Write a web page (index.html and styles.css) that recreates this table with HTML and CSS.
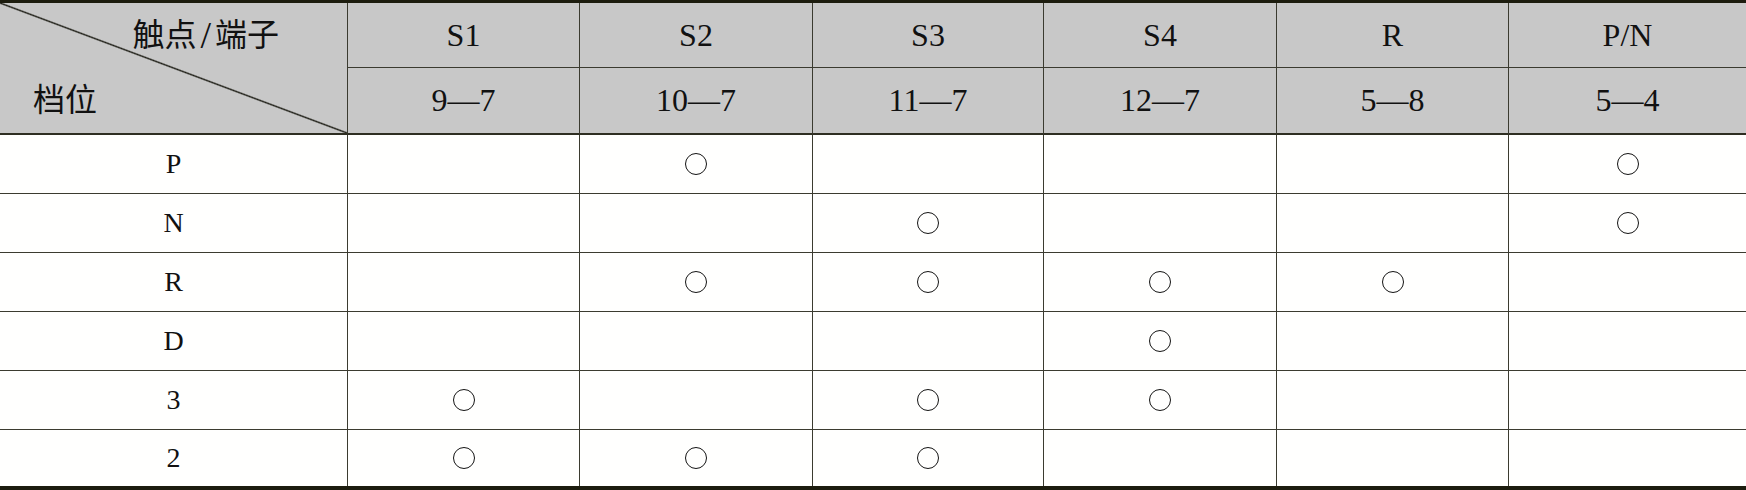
FILE: index.html
```html
<!DOCTYPE html>
<html lang="zh">
<head>
<meta charset="utf-8">
<title>档位触点表</title>
<link rel="stylesheet" href="styles.css">
</head>
<body>
<table class="grid">
  <colgroup>
    <col class="c0"><col class="c1"><col class="c2"><col class="c3"><col class="c4"><col class="c5"><col class="c6">
  </colgroup>
  <thead>
    <tr class="h1">
      <th rowspan="2" class="diag">
        <div class="diag-box">
          <span class="diag-top">触点<span class="slash">/</span>端子</span>
          <span class="diag-bottom">档位</span>
        </div>
      </th>
      <th>S1</th><th>S2</th><th>S3</th><th>S4</th><th>R</th><th class="last">P/N</th>
    </tr>
    <tr class="h2">
      <th>9—7</th><th>10—7</th><th>11—7</th><th>12—7</th><th>5—8</th><th class="last">5—4</th>
    </tr>
  </thead>
  <tbody>
    <tr><td class="gear">P</td><td></td><td><span class="dot"></span></td><td></td><td></td><td></td><td class="last"><span class="dot"></span></td></tr>
    <tr><td class="gear">N</td><td></td><td></td><td><span class="dot"></span></td><td></td><td></td><td class="last"><span class="dot"></span></td></tr>
    <tr><td class="gear">R</td><td></td><td><span class="dot"></span></td><td><span class="dot"></span></td><td><span class="dot"></span></td><td><span class="dot"></span></td><td class="last"></td></tr>
    <tr><td class="gear">D</td><td></td><td></td><td></td><td><span class="dot"></span></td><td></td><td class="last"></td></tr>
    <tr><td class="gear">3</td><td><span class="dot"></span></td><td></td><td><span class="dot"></span></td><td><span class="dot"></span></td><td></td><td class="last"></td></tr>
    <tr class="final"><td class="gear">2</td><td><span class="dot"></span></td><td><span class="dot"></span></td><td><span class="dot"></span></td><td></td><td></td><td class="last"></td></tr>
  </tbody>
</table>
</body>
</html>
```
FILE: styles.css
```css
html, body {
  margin: 0;
  padding: 0;
  background: #ffffff;
}

.grid {
  width: 1746px;
  table-layout: fixed;
  border-collapse: separate;
  border-spacing: 0;
  border-top: 3px solid #1c1c0e;
  border-bottom: 4px solid #1c1c0e;
  font-family: "Liberation Serif", "Noto Sans CJK SC", serif;
  color: #111111;
  background: #fffffe;
}

.c0 { width: 348px; }
.c1 { width: 232px; }
.c2 { width: 233px; }
.c3 { width: 231px; }
.c4 { width: 233px; }
.c5 { width: 232px; }
.c6 { width: 237px; }

th, td {
  padding: 0;
  text-align: center;
  vertical-align: middle;
  border-right: 1px solid #3b3b30;
  border-bottom: 1px solid #3b3b30;
}

th {
  background: #c8c8c8;
  font-weight: normal;
  font-size: 32px;
}

.last {
  border-right: none;
}

.h1 th {
  height: 64px;
}

.h2 th {
  height: 65px;
  border-bottom: 2px solid #2e2e22;
}

.diag {
  border-bottom: 2px solid #2e2e22;
  background-color: #c8c8c8;
  background-image: linear-gradient(to top right, transparent calc(50% - 1.4px), #1e1e16 50%, transparent calc(50% + 1.4px));
}

.diag-box {
  height: 130px;
  display: flex;
  flex-direction: column;
  justify-content: space-between;
  font-size: 32px;
}

.diag-top {
  align-self: flex-end;
  padding-right: 68px;
  padding-top: 12px;
  line-height: 40px;
}

.slash {
  font-size: 38px;
  margin: 0 4px;
  vertical-align: -2px;
}

.diag-bottom {
  align-self: flex-start;
  padding-left: 33px;
  padding-bottom: 13px;
  line-height: 40px;
}

td {
  height: 58px;
  font-size: 28px;
  line-height: 1;
}

.final td {
  height: 56px;
  border-bottom: none;
}

.dot {
  display: block;
  margin: -1px auto 0;
  width: 20px;
  height: 20px;
  border: 1.6px solid #141414;
  border-radius: 50%;
}
```
